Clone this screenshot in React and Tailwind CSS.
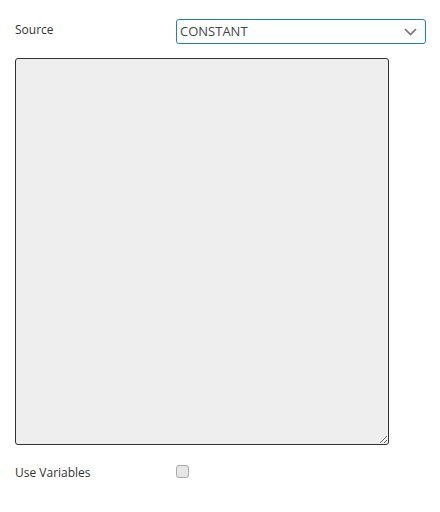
export default function App() {
  return (
    <div className="w-[440px] h-[512px] bg-white text-[#333] text-[12px] font-['Open_Sans',sans-serif]">
      <div className="pl-[15px] pt-[19px]">
        {/* Source row */}
        <div className="flex items-start">
          <label className="w-[161px] pt-[2px] leading-[18px]">Source</label>
          <div className="relative w-[250px] h-[25px] border border-[#1a7fd4] rounded-[3px] flex items-center pl-[3px]">
            <span className="text-[13px] text-[#444]">CONSTANT</span>
            <svg className="absolute right-[8px] top-[8px]" width="13" height="8" viewBox="0 0 13 8">
              <path d="M1 1l5.5 5.5L12 1" fill="none" stroke="#777" strokeWidth="1.7" />
            </svg>
          </div>
        </div>

        {/* Textarea */}
        <textarea className="block mt-[14px] w-[374px] h-[387px] bg-[#eeeeee] border border-[#333] rounded-[3px] resize-y outline-none" />

        {/* Use Variables row */}
        <div className="flex items-center mt-[19px]">
          <label className="w-[161px] leading-[18px]">Use Variables</label>
          <input type="checkbox" className="w-[13px] h-[13px] appearance-none rounded-[3px] border border-[#aaa] bg-[#e6e6e6] -mt-[4px]" />
        </div>
      </div>
    </div>
  );
}
